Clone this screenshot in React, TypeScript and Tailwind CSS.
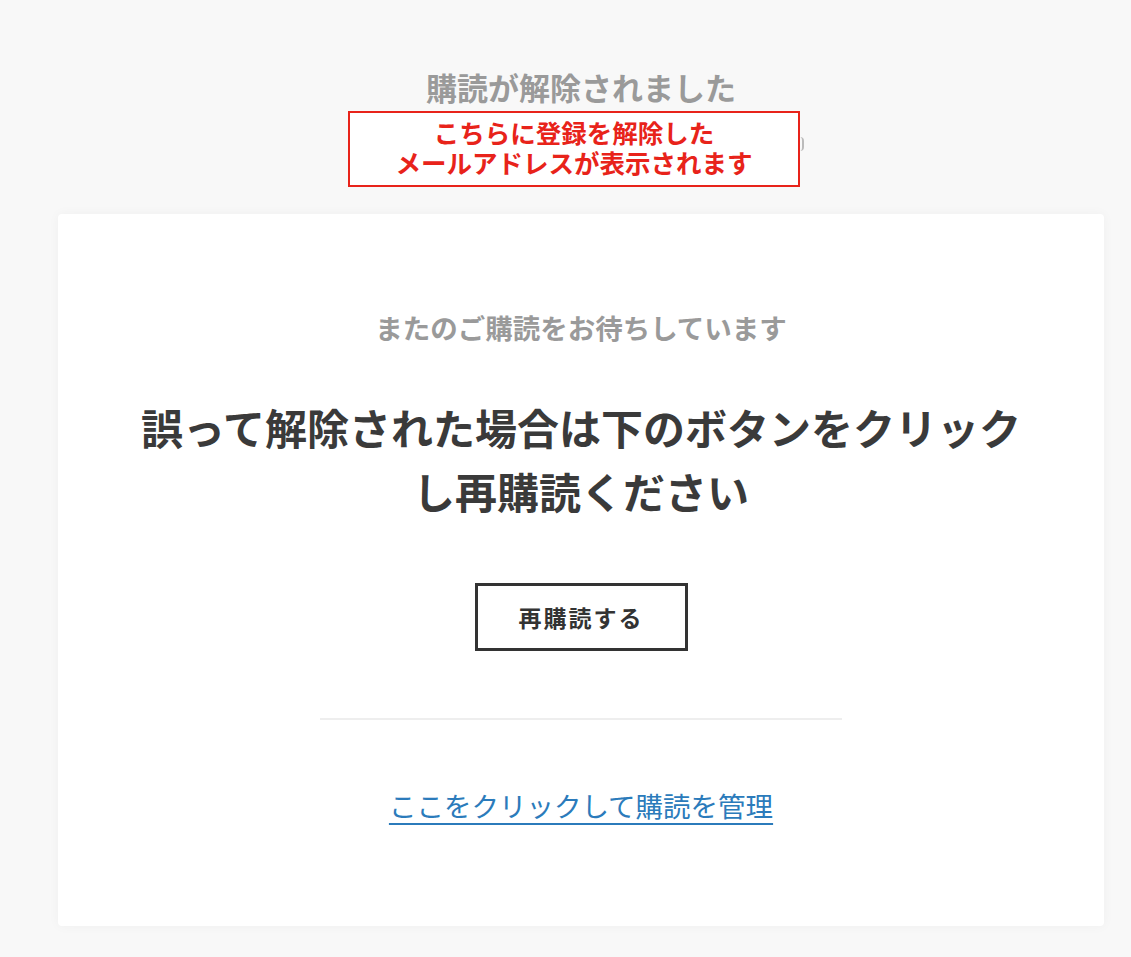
export default function App() {
  return (
    <div
      className="min-h-[957px] bg-[#f8f8f8] pl-[58px] pr-[27px] pt-[69px] pb-[31px]"
      style={{ fontFamily: '"Noto Sans CJK JP", "Noto Sans", sans-serif' }}
    >
      <div className="flex flex-col items-center">
        <h1 className="text-[31px] leading-[36px] font-bold text-[#9a9a9a]">
          購読が解除されました
        </h1>
        <div className="relative mt-[6px] -ml-[14px]">
          <div className="w-[452px] border-2 border-[#e8231a] pt-[4px] pb-[8px] text-center text-[25.5px] leading-[30px] font-bold text-[#e8231a] bg-white">
            <span className="block">こちらに登録を解除した</span>
            <span className="block">メールアドレスが表示されます</span>
          </div>
          <div className="absolute -right-[4px] top-[26px] h-[14px] w-[4px] rounded-r-full border-r-2 border-[#bbb]" />
        </div>
      </div>

      <div className="mt-[27px] rounded-[4px] bg-white shadow-[0_0_12px_rgba(0,0,0,0.04)] pt-[93px] pb-[101px] flex flex-col items-center">
        <p className="text-[27.5px] leading-[40px] font-bold text-[#9a9a9a]">
          またのご購読をお待ちしています
        </p>
        <h2 className="mt-[48px] text-[42px] leading-[64px] font-bold text-[#3a3a3a] text-center">
          誤って解除された場合は下のボタンをクリック
          <br />
          し再購読ください
        </h2>
        <button className="mt-[60px] h-[68px] w-[213px] border-[3px] border-[#333] bg-white text-[23px] font-bold tracking-[2px] text-[#333]">
          再購読する
        </button>
        <div className="mt-[67px] h-[2px] w-[522px] bg-[#eeeeee]" />
        <a
          href="#"
          className="mt-[65px] text-[27.5px] leading-[40px] text-[#2b7bbb] underline underline-offset-[6px] decoration-[2px]"
        >
          ここをクリックして購読を管理
        </a>
      </div>
    </div>
  );
}
